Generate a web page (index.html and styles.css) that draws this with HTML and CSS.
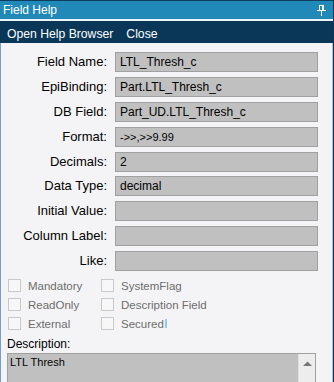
FILE: index.html
```html
<!DOCTYPE html>
<html lang="en">
<head>
  <meta charset="UTF-8">
  <title>Field Help</title>
  <link rel="stylesheet" href="styles.css">
</head>
<body>

  <div class="window">
    <!-- Title bar -->
    <div class="titlebar">
      <span class="title">Field Help</span>
      <svg class="pin" width="9" height="11" viewBox="0 0 9 11">
        <rect x="2.5" y="0.5" width="4" height="5" fill="none" stroke="#fff"/>
        <rect x="0" y="5" width="9" height="1" fill="#fff"/>
        <rect x="4" y="6" width="1" height="5" fill="#fff"/>
        <rect x="5" y="1" width="1" height="4" fill="#fff"/>
      </svg>
    </div>

    <!-- Menu -->
    <div class="menubar">
      <span class="menu-item">Open Help Browser</span>
      <span class="menu-item">Close</span>
    </div>

    <!-- Content -->
    <div class="content">
      <div class="fields">
        <label>Field Name:</label><div class="box">LTL_Thresh_c</div>
        <label>EpiBinding:</label><div class="box">Part.LTL_Thresh_c</div>
        <label>DB Field:</label><div class="box">Part_UD.LTL_Thresh_c</div>
        <label>Format:</label><div class="box small">-&gt;&gt;,&gt;&gt;9.99</div>
        <label>Decimals:</label><div class="box">2</div>
        <label>Data Type:</label><div class="box">decimal</div>
        <label>Initial Value:</label><div class="box"></div>
        <label>Column Label:</label><div class="box"></div>
        <label>Like:</label><div class="box"></div>
      </div>

      <div class="checks">
        <div class="check"><span class="cb"></span>Mandatory</div>
        <div class="check"><span class="cb"></span>SystemFlag</div>
        <div class="check"><span class="cb"></span>ReadOnly</div>
        <div class="check"><span class="cb"></span>Description Field</div>
        <div class="check"><span class="cb"></span>External</div>
        <div class="check"><span class="cb"></span>Secured<span class="focus"></span></div>
      </div>

      <div class="desc-label">Description:</div>
      <div class="desc-box">
        <div class="desc-text">LTL Thresh</div>
        <div class="scrollbar">
          <svg width="9" height="5" viewBox="0 0 9 5"><path d="M0 5 L4.5 0.5 L9 5 Z" fill="#777"/></svg>
        </div>
      </div>
    </div>
  </div>

</body>
</html>
```

FILE: styles.css
```css
/* General styles */
body {
  margin: 0;
  background-color: #f4f4f6;
  font-family: 'Liberation Sans', Arial, sans-serif;
  overflow: hidden;
}

.window {
  width: 334px;
  height: 382px;
  display: flex;
  flex-direction: column;
  box-sizing: border-box;
  border-right: 1px solid #0b3456;
  overflow: hidden;
}

/* Title bar */
.titlebar {
  flex-shrink: 0;
  height: 18px;
  background-color: #2189b8;
  border-top: 1px solid #0d3e5e;
  border-bottom: 2px solid #eef4f8;
  display: flex;
  align-items: center;
  justify-content: space-between;
  padding: 0 7px 0 3px;
}

.title {
  color: #ffffff;
  font-size: 12px;
}

.pin {
  display: block;
}

/* Menu */
.menubar {
  flex-shrink: 0;
  height: 22px;
  background-color: #0a3758;
  display: flex;
  align-items: center;
  gap: 13px;
  padding: 0 7px;
}

.menu-item {
  color: #ffffff;
  font-size: 12.2px;
  padding-top: 3px;
}

/* Content */
.content {
  flex: 1;
  min-height: 0;
  border-left: 1px solid #6f9fd6;
  border-right: 1px solid #a9c3df;
  padding-top: 9px;
}

.fields {
  display: grid;
  grid-template-columns: 106px 203px;
  column-gap: 8px;
  row-gap: 4.875px;
}

.fields label {
  text-align: right;
  font-size: 13px;
  color: #000;
  line-height: 20px;
}

.box {
  height: 20px;
  box-sizing: border-box;
  background-color: #c0c0c0;
  border: 1px solid #a0a0a0;
  font-size: 12px;
  line-height: 18px;
  padding-left: 4px;
  color: #000;
}

.box.small {
  font-size: 11px;
}

/* Checkboxes */
.checks {
  display: grid;
  grid-template-columns: 93px 150px;
  row-gap: 6px;
  margin: 8px 0 0 7px;
}

.check {
  display: flex;
  align-items: center;
  font-size: 11.5px;
  color: #6d6d6d;
  height: 13px;
}

.cb {
  width: 11px;
  height: 11px;
  border: 1px solid #c9c9c9;
  background-color: #f7f7f7;
  margin-right: 7px;
  flex-shrink: 0;
}

.focus {
  display: inline-block;
  width: 2px;
  height: 9px;
  background-color: #8fcdf6;
  margin-left: 1px;
}

/* Description */
.desc-label {
  font-size: 12px;
  color: #000;
  margin: 7px 0 0 6px;
  height: 14px;
}

.desc-box {
  margin: 2px 0 0 6px;
  width: 309px;
  height: 60px;
  box-sizing: border-box;
  background-color: #c0c0c0;
  border: 1px solid #a0a0a0;
  display: flex;
  justify-content: space-between;
}

.desc-text {
  font-size: 11px;
  padding: 2px 0 0 2px;
  color: #000;
}

.scrollbar {
  width: 17px;
  background-color: #ededed;
  border-left: 1px solid #e0e0e0;
  display: flex;
  justify-content: center;
  padding-top: 7px;
  box-sizing: border-box;
}

.scrollbar svg {
  display: block;
}
```
